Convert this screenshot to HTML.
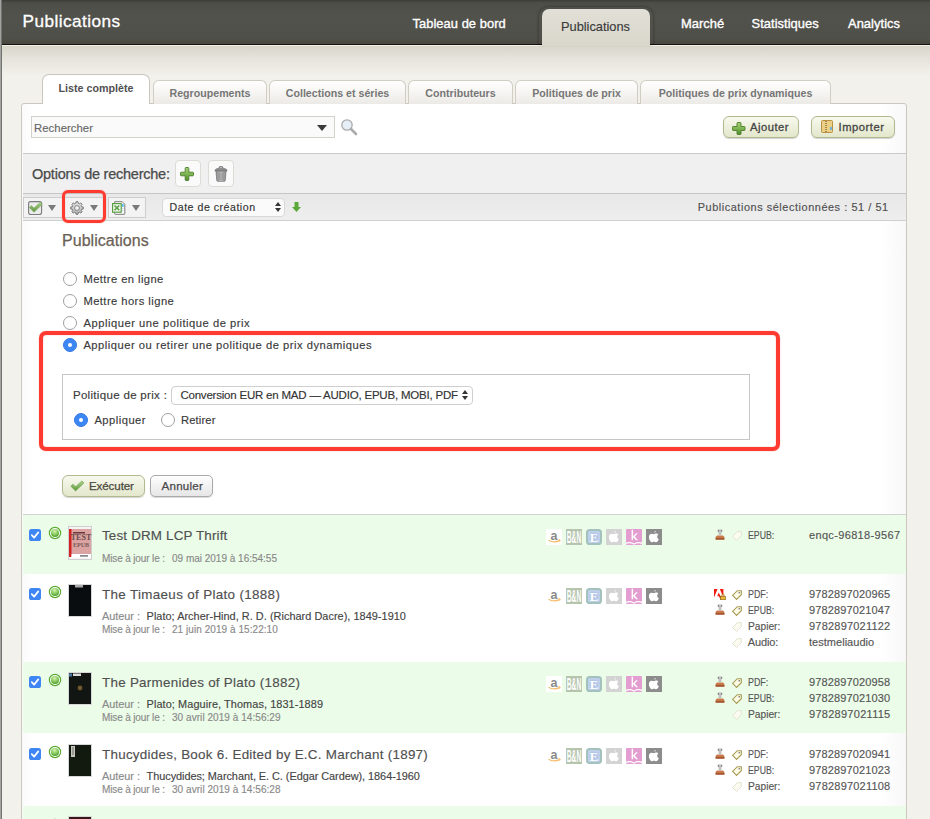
<!DOCTYPE html>
<html><head><meta charset="utf-8"><style>
*{box-sizing:border-box;margin:0;padding:0}
html,body{width:930px;height:819px;overflow:hidden}
body{position:relative;background:#f2f1ec;font-family:"Liberation Sans",sans-serif;color:#444}
.a{position:absolute;white-space:nowrap;-webkit-text-stroke:0.15px currentColor}
svg,svg *{-webkit-text-stroke:0}
.rad{border-radius:50%;border:1px solid #a0a0a0;background:#fff}
.rads{border-radius:50%;background:#3d87f5;border:1px solid #3479e6}
.rads:after{content:"";position:absolute;left:4px;top:4px;width:4px;height:4px;border-radius:50%;background:#fff}
</style></head><body>
<div class="a " style="left:0px;top:0px;width:930px;height:44px;background:linear-gradient(#3c3c38 0,#4e4e49 3px,#52524c 15px,#50504a 38px,#47473f 44px)"></div>
<div class="a " style="left:0px;top:44px;width:930px;height:1px;background:#141412"></div>
<div class="a " style="left:0px;top:45px;width:930px;height:1px;background:#f2f0e6"></div>
<div class="a " style="left:0px;top:46px;width:930px;height:30px;background:linear-gradient(#d8d6cb,#e6e4dc 45%,#f2f1ec)"></div>
<div class="a" style="left:22.5px;top:10px;font-size:17.2px;line-height:22px;color:#fff;letter-spacing:0.45px;-webkit-text-stroke:0.3px #fff">Publications</div>
<div class="a" style="left:412.5px;top:16px;font-size:12.9px;line-height:16px;color:#fff;letter-spacing:0.05px;-webkit-text-stroke:0.35px #fff">Tableau de bord</div>
<div class="a" style="left:681px;top:16px;font-size:12.9px;line-height:16px;color:#fff;letter-spacing:0.05px;-webkit-text-stroke:0.35px #fff">Marché</div>
<div class="a" style="left:751.5px;top:16px;font-size:12.9px;line-height:16px;color:#fff;letter-spacing:0.05px;-webkit-text-stroke:0.35px #fff">Statistiques</div>
<div class="a" style="left:848px;top:16px;font-size:12.9px;line-height:16px;color:#fff;letter-spacing:0.05px;-webkit-text-stroke:0.35px #fff">Analytics</div>
<div class="a " style="left:539px;top:7px;width:114px;height:37px;border-radius:9px 9px 0 0;box-shadow:0 0 3px rgba(0,0,0,.45)"></div>
<div class="a " style="left:542px;top:9px;width:108px;height:37px;border-radius:7px 7px 0 0;background:linear-gradient(#e2e0d6,#d9d7cc)"></div>
<div class="a" style="left:561px;top:19px;font-size:12.8px;line-height:16px;color:#3a3a3a">Publications</div>
<div class="a " style="left:21px;top:103px;width:886px;height:720px;background:linear-gradient(90deg,#fafafa 0,#fff 12px,#fff 860px,#f7f7f7 885px);border:1px solid #cbc9bf;border-radius:3px 3px 0 0"></div>
<div class="a " style="left:153px;top:80px;width:114px;height:24px;border:1px solid #d0cec3;border-bottom:none;border-radius:6px 6px 0 0;background:linear-gradient(#fff,#f6f5f2 50%,#ebeae6)"></div>
<div class="a" style="left:153px;top:80px;width:114px;text-align:center;font-size:10.65px;font-weight:bold;color:#767676;line-height:26px;-webkit-text-stroke:0">Regroupements</div>
<div class="a " style="left:269px;top:80px;width:137px;height:24px;border:1px solid #d0cec3;border-bottom:none;border-radius:6px 6px 0 0;background:linear-gradient(#fff,#f6f5f2 50%,#ebeae6)"></div>
<div class="a" style="left:269px;top:80px;width:137px;text-align:center;font-size:10.65px;font-weight:bold;color:#767676;line-height:26px;-webkit-text-stroke:0">Collections et séries</div>
<div class="a " style="left:408px;top:80px;width:105px;height:24px;border:1px solid #d0cec3;border-bottom:none;border-radius:6px 6px 0 0;background:linear-gradient(#fff,#f6f5f2 50%,#ebeae6)"></div>
<div class="a" style="left:408px;top:80px;width:105px;text-align:center;font-size:10.65px;font-weight:bold;color:#767676;line-height:26px;-webkit-text-stroke:0">Contributeurs</div>
<div class="a " style="left:515px;top:80px;width:123px;height:24px;border:1px solid #d0cec3;border-bottom:none;border-radius:6px 6px 0 0;background:linear-gradient(#fff,#f6f5f2 50%,#ebeae6)"></div>
<div class="a" style="left:515px;top:80px;width:123px;text-align:center;font-size:10.65px;font-weight:bold;color:#767676;line-height:26px;-webkit-text-stroke:0">Politiques de prix</div>
<div class="a " style="left:640px;top:80px;width:191px;height:24px;border:1px solid #d0cec3;border-bottom:none;border-radius:6px 6px 0 0;background:linear-gradient(#fff,#f6f5f2 50%,#ebeae6)"></div>
<div class="a" style="left:640px;top:80px;width:191px;text-align:center;font-size:10.65px;font-weight:bold;color:#767676;line-height:26px;-webkit-text-stroke:0">Politiques de prix dynamiques</div>
<div class="a " style="left:42px;top:74px;width:108px;height:30px;border:1px solid #c9c7bb;border-bottom:none;border-radius:7px 7px 0 0;background:#fff;z-index:1"></div>
<div class="a" style="left:42px;top:74px;width:108px;text-align:center;font-size:10.7px;font-weight:bold;color:#505050;line-height:28px;z-index:2;-webkit-text-stroke:0">Liste complète</div>
<div class="a " style="left:31px;top:116px;width:304px;height:22px;border:1px solid #d3d1cb;background:#fafafa"></div>
<div class="a" style="left:34px;top:121px;font-size:11.3px;line-height:14px;color:#666;letter-spacing:0.064px">Rechercher</div>
<div class="a " style="left:317px;top:125px;width:0px;height:0px;border-left:5px solid transparent;border-right:5px solid transparent;border-top:6px solid #3a3a3a"></div>
<svg class="a" style="left:340px;top:118px" width="19" height="19" viewBox="0 0 19 19"><line x1="10.5" y1="10.5" x2="16" y2="16" stroke="#ababab" stroke-width="2.6" stroke-linecap="round"/><circle cx="7" cy="7" r="5.2" fill="#e6eef8" stroke="#ababab" stroke-width="1.3"/></svg>
<div class="a " style="left:723px;top:116px;width:76px;height:22px;border:1px solid #b3b98f;border-radius:6px;background:linear-gradient(#f8f9ee,#e3e7cb);box-shadow:0 1px 1px rgba(0,0,0,.18)"></div>
<svg class="a" style="left:731.5px;top:121.5px" width="14" height="13" viewBox="0 0 14 13"><defs><linearGradient id="pg2" x1="0" y1="0" x2="0" y2="1"><stop offset="0" stop-color="#a6d07c"/><stop offset=".5" stop-color="#7fb552"/><stop offset="1" stop-color="#4f8a2a"/></linearGradient></defs><path d="M5 1.2q0-.7.7-.7h2.6q.7 0 .7.7v3.3h3.3q.7 0 .7.7v2.6q0 .7-.7.7H9v3.3q0 .7-.7.7H5.7q-.7 0-.7-.7V8.5H1.2q-.7 0-.7-.7V5.2q0-.7.7-.7H5z" fill="url(#pg2)" stroke="#4d7d2a" stroke-width=".9"/></svg>
<div class="a" style="left:750px;top:120px;font-size:11.2px;line-height:14px;color:#444;letter-spacing:0.499px;-webkit-text-stroke:0.3px #444">Ajouter</div>
<div class="a " style="left:811px;top:116px;width:84px;height:22px;border:1px solid #b3b98f;border-radius:6px;background:linear-gradient(#f8f9ee,#e3e7cb);box-shadow:0 1px 1px rgba(0,0,0,.18)"></div>
<svg class="a" style="left:821px;top:120px" width="12" height="13" viewBox="0 0 12 13"><rect x=".5" y=".5" width="11" height="12" rx="1" fill="#eccf86" stroke="#b89145"/><path d="M5 1v11" stroke="#8a6a30" stroke-width="1.4" stroke-dasharray="1 1"/><rect x="9" y="7" width="2" height="3" fill="#6cb6e0"/></svg>
<div class="a" style="left:838.60px;top:120px;font-size:11.2px;line-height:14px;color:#444;letter-spacing:0.526px;-webkit-text-stroke:0.3px #444">Importer</div>
<div class="a " style="left:23px;top:153px;width:883px;height:41px;background:#f0f0f0;border-top:1px solid #c9c9c9"></div>
<div class="a" style="left:32px;top:165px;font-size:14.5px;line-height:18px;color:#4a4a4a;letter-spacing:-0.234px;-webkit-text-stroke:0.25px #4a4a4a">Options de recherche:</div>
<div class="a " style="left:175px;top:160px;width:26px;height:27px;border:1px solid #dddbd6;border-radius:4px;background:#fafafa"></div>
<svg class="a" style="left:180px;top:167px" width="15" height="15" viewBox="0 0 15 15"><defs><linearGradient id="pg" x1="0" y1="0" x2="0" y2="1"><stop offset="0" stop-color="#a6d07c"/><stop offset=".5" stop-color="#7fb552"/><stop offset="1" stop-color="#4f8a2a"/></linearGradient></defs><path d="M5.2 1.3q0-.8.8-.8h2q.8 0 .8.8v3.9h3.9q.8 0 .8.8v2q0 .8-.8.8H8.8v3.9q0 .8-.8.8H6q-.8 0-.8-.8V8.8H1.3q-.8 0-.8-.8V6q0-.8.8-.8h3.9z" fill="url(#pg)" stroke="#4d7d2a" stroke-width=".9"/></svg>
<div class="a " style="left:208px;top:160px;width:26px;height:27px;border:1px solid #dddbd6;border-radius:4px;background:#fafafa"></div>
<svg class="a" style="left:214px;top:166px" width="14" height="16" viewBox="0 0 14 16"><defs><linearGradient id="tg" x1="0" y1="0" x2="1" y2="0"><stop offset="0" stop-color="#8a8a8a"/><stop offset=".5" stop-color="#c8c8c8"/><stop offset="1" stop-color="#8a8a8a"/></linearGradient></defs><path d="M5 2.2q0-1.5 2-1.5t2 1.5" fill="none" stroke="#777" stroke-width="1.2"/><path d="M1 4.2q0-2 6-2t6 2v.9H1z" fill="#8c8c8c" stroke="#6a6a6a" stroke-width=".6"/><path d="M2 5.2h10l-.8 9.4q-.1.7-.8.7H3.6q-.7 0-.8-.7z" fill="url(#tg)" stroke="#777" stroke-width=".8"/><path d="M5 6.5v7.5M7 6.5v7.5M9 6.5v7.5" stroke="#888" stroke-width=".9"/></svg>
<div class="a " style="left:23px;top:193px;width:883px;height:28px;background:linear-gradient(#e8e8e8,#eeeeee);border-top:1px solid #c6c6c6;border-bottom:1px solid #cfcfcf"></div>
<div class="a " style="left:23px;top:197px;width:40px;height:21px;border:1px solid #cdcdcd;background:#f3f3f3"></div>
<div class="a " style="left:63px;top:197px;width:42px;height:21px;border:1px solid #cdcdcd;background:#f3f3f3"></div>
<div class="a " style="left:108px;top:197px;width:38px;height:21px;border:1px solid #cdcdcd;background:#f3f3f3"></div>
<div class="a " style="left:48px;top:205px;width:0px;height:0px;border-left:4px solid transparent;border-right:4px solid transparent;border-top:6px solid #7a7a7a"></div>
<div class="a " style="left:90px;top:205px;width:0px;height:0px;border-left:4px solid transparent;border-right:4px solid transparent;border-top:6px solid #7a7a7a"></div>
<div class="a " style="left:132px;top:205px;width:0px;height:0px;border-left:4px solid transparent;border-right:4px solid transparent;border-top:6px solid #7a7a7a"></div>
<svg class="a" style="left:28px;top:201px" width="15" height="14" viewBox="0 0 15 14"><defs><linearGradient id="cg" x1="0" y1="0" x2="0" y2="1"><stop offset="0" stop-color="#a8d08a"/><stop offset="1" stop-color="#5e9440"/></linearGradient></defs><rect x=".6" y=".6" width="13" height="13" rx="2" fill="#ececec" stroke="#7a7a7a" stroke-width="1.1"/><path d="M1.2 6.5l2.2-2 2.6 2.6 6.3-5.9 2 2.1-8.3 7.9z" fill="url(#cg)" stroke="#78a858" stroke-width=".5"/></svg>
<svg class="a" style="left:70px;top:201px" width="14" height="14" viewBox="0 0 14 14"><defs><linearGradient id="gg" x1="0" y1="0" x2="0" y2="1"><stop offset="0" stop-color="#e8e8e8"/><stop offset="1" stop-color="#b0b0b0"/></linearGradient></defs><path d="M11.75 5.78 L13.22 6.01 L13.22 7.99 L11.75 8.22 L11.22 9.49 L12.10 10.70 L10.70 12.10 L9.49 11.22 L8.22 11.75 L7.99 13.22 L6.01 13.22 L5.78 11.75 L4.51 11.22 L3.30 12.10 L1.90 10.70 L2.78 9.49 L2.25 8.22 L0.78 7.99 L0.78 6.01 L2.25 5.78 L2.78 4.51 L1.90 3.30 L3.30 1.90 L4.51 2.78 L5.78 2.25 L6.01 0.78 L7.99 0.78 L8.22 2.25 L9.49 2.78 L10.70 1.90 L12.10 3.30 L11.22 4.51Z" fill="url(#gg)" stroke="#6a6a6a" stroke-width=".9" stroke-linejoin="round"/><circle cx="7" cy="7" r="2.4" fill="#f5f5f5" stroke="#7a7a7a" stroke-width=".9"/></svg>
<svg class="a" style="left:112px;top:201px" width="14" height="14" viewBox="0 0 14 14"><path d="M2.7.7h7.5l2.6 2.6v9.5q0 .5-.5.5H3.2q-.5 0-.5-.5z" fill="#fff" stroke="#7a7a7a" stroke-width="1"/><rect x="10" y="3" width="1.6" height="3" fill="#4cb8f0"/><path d="M10.8 7v4" stroke="#9cc8e0" stroke-dasharray="1 1" stroke-width="1"/><rect x=".6" y="2.6" width="8.6" height="8.6" fill="#f4faf0" stroke="#5a9e44" stroke-width="1.2"/><path d="M2.5 4.5l4.8 4.8M7.3 4.5l-4.8 4.8" stroke="#5a9e44" stroke-width="1.6"/></svg>
<div class="a " style="left:62.3px;top:190px;width:43.7px;height:32.5px;border:3.6px solid #ff3a31;border-radius:6px;box-shadow:0 0 1px #ff6a60,inset 0 0 1px #ff6a60"></div>
<div class="a " style="left:162px;top:198px;width:123px;height:19px;border:1px solid #d8d8d8;border-radius:4px;background:#fafafa"></div>
<div class="a" style="left:169.60px;top:201px;font-size:10.6px;line-height:13px;color:#333;letter-spacing:0.513px">Date de création</div>
<svg class="a" style="left:275px;top:201px" width="6" height="12" viewBox="0 0 6 12"><path d="M0 5l3-4 3 4zM0 7l3 4 3-4z" fill="#333"/></svg>
<svg class="a" style="left:292px;top:202px" width="9" height="10" viewBox="0 0 9 10"><path d="M2.5 0h4v5h2.5l-4.5 5-4.5-5h2.5z" fill="#5aa83a"/></svg>
<div class="a" style="left:697.70px;top:200px;font-size:10.9px;line-height:14px;color:#505050;letter-spacing:0.561px">Publications sélectionnées : 51 / 51</div>
<div class="a" style="left:62px;top:231px;font-size:16px;line-height:20px;color:#6b5f56;letter-spacing:0.042px;-webkit-text-stroke:0.25px #6b5f56">Publications</div>
<div class="a rad" style="left:63px;top:272px;width:14px;height:14px;"></div>
<div class="a" style="left:83.40px;top:272px;font-size:11.2px;line-height:14px;color:#3a3a3a;letter-spacing:0.422px">Mettre en ligne</div>
<div class="a rad" style="left:63px;top:294px;width:14px;height:14px;"></div>
<div class="a" style="left:83.40px;top:294px;font-size:11.2px;line-height:14px;color:#3a3a3a;letter-spacing:0.441px">Mettre hors ligne</div>
<div class="a rad" style="left:63px;top:316px;width:14px;height:14px;"></div>
<div class="a" style="left:83.40px;top:316px;font-size:11.2px;line-height:14px;color:#3a3a3a;letter-spacing:0.527px">Appliquer une politique de prix</div>
<div class="a rads" style="left:63px;top:338px;width:14px;height:14px;"></div>
<div class="a" style="left:83.40px;top:338px;font-size:11.2px;line-height:14px;color:#3a3a3a;letter-spacing:0.507px">Appliquer ou retirer une politique de prix dynamiques</div>
<div class="a " style="left:62px;top:374px;width:688px;height:66px;border:1px solid #c6c6c6"></div>
<div class="a " style="left:38.8px;top:330.7px;width:741.5px;height:120.5px;border:4px solid #ff3a31;border-radius:7px;box-shadow:0 0 1px #ff6a60,inset 0 0 1px #ff6a60"></div>
<div class="a" style="left:72.90px;top:388px;font-size:11.5px;line-height:14px;color:#3a3a3a;letter-spacing:0.322px">Politique de prix :</div>
<div class="a " style="left:171px;top:385.5px;width:302px;height:19.5px;border:1px solid #cfcfcf;border-radius:4px;background:#fff"></div>
<div class="a" style="left:180.40px;top:388px;font-size:11.5px;line-height:14px;color:#333;letter-spacing:-0.207px">Conversion EUR en MAD — AUDIO, EPUB, MOBI, PDF</div>
<svg class="a" style="left:462px;top:389px" width="6" height="12" viewBox="0 0 6 12"><path d="M0 5l3-4 3 4zM0 7l3 4 3-4z" fill="#333"/></svg>
<div class="a rads" style="left:74px;top:413px;width:14px;height:14px;"></div>
<div class="a" style="left:94.40px;top:413px;font-size:11.2px;line-height:14px;color:#3a3a3a;letter-spacing:0.485px">Appliquer</div>
<div class="a rad" style="left:161px;top:413px;width:14px;height:14px;"></div>
<div class="a" style="left:181px;top:413px;font-size:11.2px;line-height:14px;color:#3a3a3a;letter-spacing:0.150px">Retirer</div>
<div class="a " style="left:62px;top:475px;width:83px;height:22px;border:1px solid #b3b98f;border-radius:6px;background:linear-gradient(#f8f9ee,#e3e7cb);box-shadow:0 1px 1px rgba(0,0,0,.18)"></div>
<svg class="a" style="left:70px;top:480px" width="14" height="12" viewBox="0 0 14 12"><defs><linearGradient id="eg" x1="0" y1="0" x2="0" y2="1"><stop offset="0" stop-color="#b0d890"/><stop offset="1" stop-color="#5a9838"/></linearGradient></defs><path d="M.8 6.2l2.2-2 2.6 2.6 6.3-5.9 2 2.1-8.3 7.9z" fill="url(#eg)" stroke="#6a9c4a" stroke-width=".6"/></svg>
<div class="a" style="left:88.90px;top:479px;font-size:11.6px;line-height:14px;color:#4a4a40;letter-spacing:-0.095px;-webkit-text-stroke:0.25px #4a4a40">Exécuter</div>
<div class="a " style="left:150px;top:475px;width:63px;height:22px;border:1px solid #a9a9a9;border-radius:5px;background:linear-gradient(#fefefe,#e6e6e6);box-shadow:0 1px 1px rgba(0,0,0,.15)"></div>
<div class="a" style="left:161.50px;top:479px;font-size:11.6px;line-height:14px;color:#4a4a4a;letter-spacing:0.223px;-webkit-text-stroke:0.25px #4a4a4a">Annuler</div>
<div class="a " style="left:23px;top:514px;width:883px;height:1px;background:#d2d2d2"></div>
<svg width="0" height="0" style="position:absolute"><defs><symbol id="amz" viewBox="0 0 16 16"><rect width="16" height="16" fill="#fff"/><text x="8" y="10.6" text-anchor="middle" font-family="Liberation Sans" font-weight="bold" font-size="12.5" fill="#8a8a8a">a</text><path d="M2.4 11.2q5.6 3.3 11.6.2" fill="none" stroke="#f5bd6b" stroke-width="1.2"/><path d="M12.6 10.4l1.6.7-.6 1.5" fill="none" stroke="#f5bd6b" stroke-width="1"/></symbol><symbol id="bn" viewBox="0 0 16 16"><rect width="16" height="16" fill="#b5c5ae"/><text x="8" y="13.9" text-anchor="middle" font-family="Liberation Sans" font-weight="bold" font-size="16" fill="#fff" textLength="14.4" lengthAdjust="spacingAndGlyphs">B&amp;N</text></symbol><symbol id="eb" viewBox="0 0 16 16"><rect x="1" y="1" width="14" height="14" rx="2.6" fill="#b3c6e6" stroke="#a3c2bd" stroke-width="2"/><rect x="3" y="3" width="10" height="10" fill="none" stroke="#d8e4f4" stroke-width=".6"/><text x="8" y="12.6" text-anchor="middle" font-family="Liberation Serif" font-weight="bold" font-size="12.5" fill="#fff">E</text></symbol><symbol id="apl" viewBox="0 0 16 16"><rect width="16" height="16" fill="#d3d3d3"/><path d="M8.1 5.3c-.8 0-1.5-.5-2.5-.5C4 4.8 2.9 6.1 2.9 8c0 2.5 1.7 5.3 3 5.3.8 0 1.1-.5 2.1-.5s1.3.5 2.1.5c1.2 0 2.3-2.1 2.7-3.1-1-.4-1.6-1.3-1.6-2.4 0-1 .5-1.8 1.3-2.2-.5-.7-1.4-1.2-2.3-1.2-1 0-1.6.5-2.1.5zM9.9 2c-.7.1-1.6.6-1.8 1.6.7.1 1.6-.5 1.8-1.6z" fill="#fff"/></symbol><symbol id="apd" viewBox="0 0 16 16"><rect width="16" height="16" fill="#8c8c8c"/><path d="M8.1 5.3c-.8 0-1.5-.5-2.5-.5C4 4.8 2.9 6.1 2.9 8c0 2.5 1.7 5.3 3 5.3.8 0 1.1-.5 2.1-.5s1.3.5 2.1.5c1.2 0 2.3-2.1 2.7-3.1-1-.4-1.6-1.3-1.6-2.4 0-1 .5-1.8 1.3-2.2-.5-.7-1.4-1.2-2.3-1.2-1 0-1.6.5-2.1.5zM9.9 2c-.7.1-1.6.6-1.8 1.6.7.1 1.6-.5 1.8-1.6z" fill="#fff"/></symbol><symbol id="kob" viewBox="0 0 16 16"><rect width="16" height="16" rx="1" fill="#e39dd0"/><path d="M5.6 .8h1.5v6.6l2.9-3.2h1.8l-3 3.2 3.2 3.8H10.2L7.1 8.2v3H5.6z" fill="#fff"/><path d="M0 13.6q4-1.6 8 .8 4-2.4 8-.8v1.3q-4-1.4-8 .8-4-2.2-8-.8z" fill="#fff"/></symbol><symbol id="stamp" viewBox="0 0 10 11"><defs><linearGradient id="sg" x1="0" y1="0" x2="1" y2="0"><stop offset="0" stop-color="#555"/><stop offset=".5" stop-color="#ddd"/><stop offset="1" stop-color="#555"/></linearGradient></defs><path d="M2.6 1.8q0-1.6 2.4-1.6t2.4 1.6q0 1-1.2 1.4V6H3.8V3.2Q2.6 2.8 2.6 1.8z" fill="url(#sg)"/><path d="M.6 10.6V8.4q0-1.6 1.8-2h5.2q1.8.4 1.8 2v2.2z" fill="#c8784a"/><path d="M.6 9.2h8.8v1.4H.6z" fill="#9a4c26"/></symbol><symbol id="tag" viewBox="0 0 10 10"><path d="M9.3 .7v4L4.6 9.4.6 5.4 5.3.7z" fill="#fdfbe6" stroke="#a89a52" stroke-width="1.1"/><circle cx="7.2" cy="2.8" r=".7" fill="#555"/></symbol><symbol id="tagf" viewBox="0 0 10 10"><path d="M9.3 .7v4L4.6 9.4.6 5.4 5.3.7z" fill="#fbfbf2" stroke="#e3e3cf" stroke-width="1"/></symbol><symbol id="adobe" viewBox="0 0 12 11"><path d="M0 0h3.6L0 8.6zM5.8 0h3.6v8.6zM4.7 3.4l2.9 5.8H5.8l-.8-1.9H3.2z" fill="#f01c10"/><rect x="6.4" y="7.4" width="5.2" height="3.4" fill="#e8b830" stroke="#6a4a10" stroke-width=".5"/><path d="M7.6 7.4V6.6a1.4 1.4 0 0 1 2.8 0v.8" fill="none" stroke="#c09020" stroke-width=".9"/></symbol><symbol id="chk" viewBox="0 0 12 12"><rect width="12" height="12" rx="2.6" fill="#3d86f4"/><path d="M2.8 6.2l2.3 2.4 4.2-5.2" fill="none" stroke="#fff" stroke-width="1.7" stroke-linecap="round" stroke-linejoin="round"/></symbol><symbol id="dot" viewBox="0 0 14 14"><defs><radialGradient id="dg" cx=".45" cy=".3" r=".7"><stop offset="0" stop-color="#d4f2b0"/><stop offset=".6" stop-color="#84c85a"/><stop offset="1" stop-color="#4e9a2c"/></radialGradient></defs><circle cx="7" cy="7" r="5.6" fill="#fff" stroke="#58ac30" stroke-width="1.2"/><circle cx="7" cy="7" r="4" fill="url(#dg)"/></symbol></defs></svg>
<div class="a " style="left:23px;top:515px;width:883px;height:58.700000000000045px;background:#ebfce8"></div>
<svg class="a" style="left:29px;top:529px" width="12" height="12"><use href="#chk"/></svg>
<svg class="a" style="left:47.5px;top:526px" width="14" height="14"><use href="#dot"/></svg>
<svg class="a" style="left:68px;top:526px" width="24" height="34" viewBox="0 0 24 34"><rect x=".5" y=".5" width="23" height="33" fill="#f4f4f4" stroke="#cfcfcf"/><rect x="1" y="3" width="22" height="27" fill="#dba4a2"/><rect x="1" y="3" width="2.5" height="28" fill="#d42020"/><text x="13" y="14" text-anchor="middle" font-family="Liberation Serif" font-weight="bold" font-size="8" fill="#6a4a4a">TEST</text><text x="13" y="21" text-anchor="middle" font-family="Liberation Serif" font-weight="bold" font-size="6" fill="#7a5a5a">EPUB</text><rect x="3.5" y="28" width="19.5" height="4" fill="#fff"/><rect x="12" y="29.3" width="8" height="1.2" fill="#555"/><rect x="5" y="6" width="12" height="1.5" fill="#6a3a3a"/></svg>
<div class="a" style="left:102px;top:527px;font-size:13.4px;line-height:17px;color:#505050;letter-spacing:0.170px;-webkit-text-stroke:0.15px #505050">Test DRM LCP Thrift</div>
<div class="a" style="left:102px;top:553px;font-size:10px;line-height:12px;color:#8a8a8a;letter-spacing:-0.137px">Mise à jour le :</div>
<div class="a" style="left:172px;top:553px;font-size:10px;line-height:12px;color:#8a8a8a;letter-spacing:-0.005px">09 mai 2019 à 16:54:55</div>
<svg class="a" style="left:546px;top:529px" width="16" height="16"><use href="#amz"/></svg>
<svg class="a" style="left:566px;top:529px" width="16" height="16"><use href="#bn"/></svg>
<svg class="a" style="left:586px;top:529px" width="16" height="16"><use href="#eb"/></svg>
<svg class="a" style="left:606px;top:529px" width="16" height="16"><use href="#apl"/></svg>
<svg class="a" style="left:626px;top:529px" width="16" height="16"><use href="#kob"/></svg>
<svg class="a" style="left:646px;top:529px" width="16" height="16"><use href="#apd"/></svg>
<svg class="a" style="left:715px;top:529px" width="10" height="11"><use href="#stamp"/></svg>
<svg class="a" style="left:732px;top:531px" width="10" height="10"><use href="#tagf"/></svg>
<div class="a" style="left:747.80px;top:528px;font-size:11px;line-height:14px;color:#555;transform:scaleX(0.7939);transform-origin:0.00px 0">EPUB:</div>
<div class="a" style="left:809px;top:528px;font-size:11px;line-height:14px;color:#555;letter-spacing:0.340px">enqc-96818-9567</div>
<svg class="a" style="left:29px;top:588px" width="12" height="12"><use href="#chk"/></svg>
<svg class="a" style="left:47.5px;top:585px" width="14" height="14"><use href="#dot"/></svg>
<svg class="a" style="left:68px;top:584px" width="24" height="33" viewBox="0 0 24 33"><rect x=".5" y=".5" width="23" height="32" fill="#0a0d10" stroke="#d8d8d8"/><rect x="7" y="1" width="8" height="2.5" fill="#aaa"/></svg>
<div class="a" style="left:102px;top:586px;font-size:13.4px;line-height:17px;color:#505050;letter-spacing:0.342px;-webkit-text-stroke:0.15px #505050">The Timaeus of Plato (1888)</div>
<div class="a" style="left:102px;top:609px;font-size:10.9px;line-height:14px;color:#8a8a8a;letter-spacing:-0.021px">Auteur :</div>
<div class="a" style="left:146.60px;top:609px;font-size:10.9px;line-height:14px;color:#444;letter-spacing:0.040px">Plato; Archer-Hind, R. D. (Richard Dacre), 1849-1910</div>
<div class="a" style="left:102px;top:624px;font-size:10px;line-height:12px;color:#8a8a8a;letter-spacing:-0.137px">Mise à jour le :</div>
<div class="a" style="left:172px;top:624px;font-size:10px;line-height:12px;color:#8a8a8a;letter-spacing:0.057px">21 juin 2019 à 15:22:10</div>
<svg class="a" style="left:546px;top:588px" width="16" height="16"><use href="#amz"/></svg>
<svg class="a" style="left:566px;top:588px" width="16" height="16"><use href="#bn"/></svg>
<svg class="a" style="left:586px;top:588px" width="16" height="16"><use href="#eb"/></svg>
<svg class="a" style="left:606px;top:588px" width="16" height="16"><use href="#apl"/></svg>
<svg class="a" style="left:626px;top:588px" width="16" height="16"><use href="#kob"/></svg>
<svg class="a" style="left:646px;top:588px" width="16" height="16"><use href="#apd"/></svg>
<svg class="a" style="left:714px;top:589px" width="12" height="11"><use href="#adobe"/></svg>
<svg class="a" style="left:732px;top:590px" width="10" height="10"><use href="#tag"/></svg>
<div class="a" style="left:747.80px;top:587px;font-size:11px;line-height:14px;color:#555;transform:scaleX(0.8094);transform-origin:0.00px 0">PDF:</div>
<div class="a" style="left:809px;top:587px;font-size:11px;line-height:14px;color:#555;letter-spacing:0.139px">9782897020965</div>
<svg class="a" style="left:715px;top:604px" width="10" height="11"><use href="#stamp"/></svg>
<svg class="a" style="left:732px;top:606px" width="10" height="10"><use href="#tag"/></svg>
<div class="a" style="left:747.80px;top:603px;font-size:11px;line-height:14px;color:#555;transform:scaleX(0.7939);transform-origin:0.00px 0">EPUB:</div>
<div class="a" style="left:809px;top:603px;font-size:11px;line-height:14px;color:#555;letter-spacing:0.139px">9782897021047</div>
<svg class="a" style="left:732px;top:622px" width="10" height="10"><use href="#tagf"/></svg>
<div class="a" style="left:747.80px;top:619px;font-size:11px;line-height:14px;color:#555;transform:scaleX(0.9263);transform-origin:0.00px 0">Papier:</div>
<div class="a" style="left:809px;top:619px;font-size:11px;line-height:14px;color:#555;letter-spacing:0.208px">9782897021122</div>
<svg class="a" style="left:732px;top:638px" width="10" height="10"><use href="#tagf"/></svg>
<div class="a" style="left:747.80px;top:635px;font-size:11px;line-height:14px;color:#555;letter-spacing:-0.157px">Audio:</div>
<div class="a" style="left:809px;top:635px;font-size:11px;line-height:14px;color:#555;letter-spacing:0.026px">testmeliaudio</div>
<div class="a " style="left:23px;top:661.9px;width:883px;height:71.60000000000002px;background:#ebfce8"></div>
<svg class="a" style="left:29px;top:676px" width="12" height="12"><use href="#chk"/></svg>
<svg class="a" style="left:47.5px;top:673px" width="14" height="14"><use href="#dot"/></svg>
<svg class="a" style="left:68px;top:672px" width="24" height="33" viewBox="0 0 24 33"><rect x=".5" y=".5" width="23" height="32" fill="#121612" stroke="#d8d8d8"/><rect x="1" y="1.5" width="3" height="3" fill="#4a7aa0"/><rect x="5" y="1.5" width="8" height="2.5" fill="#ddd"/><circle cx="12" cy="16" r="2.4" fill="#6b5a30"/></svg>
<div class="a" style="left:102px;top:674px;font-size:13.4px;line-height:17px;color:#505050;letter-spacing:0.278px;-webkit-text-stroke:0.15px #505050">The Parmenides of Plato (1882)</div>
<div class="a" style="left:102px;top:697px;font-size:10.9px;line-height:14px;color:#8a8a8a;letter-spacing:-0.021px">Auteur :</div>
<div class="a" style="left:146.60px;top:697px;font-size:10.9px;line-height:14px;color:#444;letter-spacing:0.088px">Plato; Maguire, Thomas, 1831-1889</div>
<div class="a" style="left:102px;top:712px;font-size:10px;line-height:12px;color:#8a8a8a;letter-spacing:-0.137px">Mise à jour le :</div>
<div class="a" style="left:172px;top:712px;font-size:10px;line-height:12px;color:#8a8a8a;letter-spacing:0.052px">30 avril 2019 à 14:56:29</div>
<svg class="a" style="left:546px;top:676px" width="16" height="16"><use href="#amz"/></svg>
<svg class="a" style="left:566px;top:676px" width="16" height="16"><use href="#bn"/></svg>
<svg class="a" style="left:586px;top:676px" width="16" height="16"><use href="#eb"/></svg>
<svg class="a" style="left:606px;top:676px" width="16" height="16"><use href="#apl"/></svg>
<svg class="a" style="left:626px;top:676px" width="16" height="16"><use href="#kob"/></svg>
<svg class="a" style="left:646px;top:676px" width="16" height="16"><use href="#apd"/></svg>
<svg class="a" style="left:715px;top:676px" width="10" height="11"><use href="#stamp"/></svg>
<svg class="a" style="left:732px;top:678px" width="10" height="10"><use href="#tag"/></svg>
<div class="a" style="left:747.80px;top:675px;font-size:11px;line-height:14px;color:#555;transform:scaleX(0.8094);transform-origin:0.00px 0">PDF:</div>
<div class="a" style="left:809px;top:675px;font-size:11px;line-height:14px;color:#555;letter-spacing:0.139px">9782897020958</div>
<svg class="a" style="left:715px;top:692px" width="10" height="11"><use href="#stamp"/></svg>
<svg class="a" style="left:732px;top:694px" width="10" height="10"><use href="#tag"/></svg>
<div class="a" style="left:747.80px;top:691px;font-size:11px;line-height:14px;color:#555;transform:scaleX(0.7939);transform-origin:0.00px 0">EPUB:</div>
<div class="a" style="left:809px;top:691px;font-size:11px;line-height:14px;color:#555;letter-spacing:0.139px">9782897021030</div>
<svg class="a" style="left:732px;top:710px" width="10" height="10"><use href="#tagf"/></svg>
<div class="a" style="left:747.80px;top:707px;font-size:11px;line-height:14px;color:#555;transform:scaleX(0.9263);transform-origin:0.00px 0">Papier:</div>
<div class="a" style="left:809px;top:707px;font-size:11px;line-height:14px;color:#555;letter-spacing:0.277px">9782897021115</div>
<svg class="a" style="left:29px;top:748px" width="12" height="12"><use href="#chk"/></svg>
<svg class="a" style="left:47.5px;top:745px" width="14" height="14"><use href="#dot"/></svg>
<svg class="a" style="left:68px;top:744px" width="24" height="33" viewBox="0 0 24 33"><rect x=".5" y=".5" width="23" height="32" fill="#121a10" stroke="#d8d8d8"/><rect x="3" y="2" width="4" height="11" fill="#c8c8c0"/><path d="M4 4h2M4 6h2M4 8h2M4 10h2" stroke="#555" stroke-width=".8"/></svg>
<div class="a" style="left:102px;top:746px;font-size:13.4px;line-height:17px;color:#505050;letter-spacing:0.269px;-webkit-text-stroke:0.15px #505050">Thucydides, Book 6. Edited by E.C. Marchant (1897)</div>
<div class="a" style="left:102px;top:769px;font-size:10.9px;line-height:14px;color:#8a8a8a;letter-spacing:-0.021px">Auteur :</div>
<div class="a" style="left:146.60px;top:769px;font-size:10.9px;line-height:14px;color:#444;letter-spacing:-0.042px">Thucydides; Marchant, E. C. (Edgar Cardew), 1864-1960</div>
<div class="a" style="left:102px;top:784px;font-size:10px;line-height:12px;color:#8a8a8a;letter-spacing:-0.137px">Mise à jour le :</div>
<div class="a" style="left:172px;top:784px;font-size:10px;line-height:12px;color:#8a8a8a;letter-spacing:0.052px">30 avril 2019 à 14:56:28</div>
<svg class="a" style="left:546px;top:748px" width="16" height="16"><use href="#amz"/></svg>
<svg class="a" style="left:566px;top:748px" width="16" height="16"><use href="#bn"/></svg>
<svg class="a" style="left:586px;top:748px" width="16" height="16"><use href="#eb"/></svg>
<svg class="a" style="left:606px;top:748px" width="16" height="16"><use href="#apl"/></svg>
<svg class="a" style="left:626px;top:748px" width="16" height="16"><use href="#kob"/></svg>
<svg class="a" style="left:646px;top:748px" width="16" height="16"><use href="#apd"/></svg>
<svg class="a" style="left:715px;top:748px" width="10" height="11"><use href="#stamp"/></svg>
<svg class="a" style="left:732px;top:750px" width="10" height="10"><use href="#tag"/></svg>
<div class="a" style="left:747.80px;top:747px;font-size:11px;line-height:14px;color:#555;transform:scaleX(0.8094);transform-origin:0.00px 0">PDF:</div>
<div class="a" style="left:809px;top:747px;font-size:11px;line-height:14px;color:#555;letter-spacing:0.139px">9782897020941</div>
<svg class="a" style="left:715px;top:764px" width="10" height="11"><use href="#stamp"/></svg>
<svg class="a" style="left:732px;top:766px" width="10" height="10"><use href="#tag"/></svg>
<div class="a" style="left:747.80px;top:763px;font-size:11px;line-height:14px;color:#555;transform:scaleX(0.7939);transform-origin:0.00px 0">EPUB:</div>
<div class="a" style="left:809px;top:763px;font-size:11px;line-height:14px;color:#555;letter-spacing:0.139px">9782897021023</div>
<svg class="a" style="left:732px;top:782px" width="10" height="10"><use href="#tagf"/></svg>
<div class="a" style="left:747.80px;top:779px;font-size:11px;line-height:14px;color:#555;transform:scaleX(0.9263);transform-origin:0.00px 0">Papier:</div>
<div class="a" style="left:809px;top:779px;font-size:11px;line-height:14px;color:#555;letter-spacing:0.208px">9782897021108</div>
<div class="a " style="left:23px;top:806px;width:883px;height:24px;background:#ebfce8"></div>
<svg class="a" style="left:29px;top:820px" width="12" height="12"><use href="#chk"/></svg>
<svg class="a" style="left:47.5px;top:818px" width="14" height="14"><use href="#dot"/></svg>
<svg class="a" style="left:68px;top:816px" width="24" height="33" viewBox="0 0 24 33"><rect x=".5" y=".5" width="23" height="32" fill="#3a1818" stroke="#d8d8d8"/></svg>
<div class="a " style="left:0px;top:0px;width:2px;height:819px;background:linear-gradient(90deg,#a3a3a0 0,#a3a3a0 1px,#727270 1px);z-index:5"></div>
</body></html>
